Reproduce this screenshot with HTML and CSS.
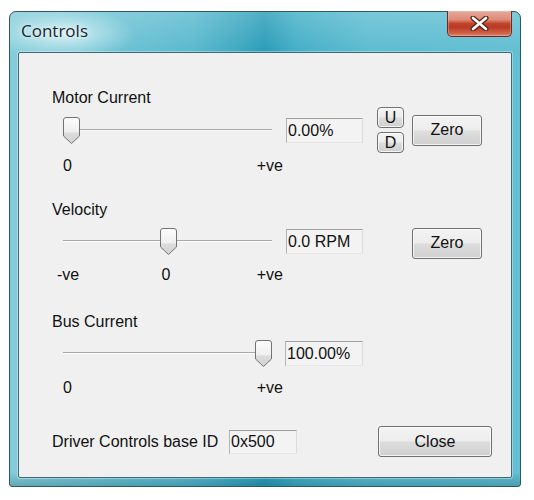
FILE: index.html
```html
<!DOCTYPE html>
<html>
<head>
<meta charset="utf-8">
<title>Controls</title>
<link rel="stylesheet" href="styles.css">
</head>
<body>
<div class="window">
  <div class="titlebar">
    <span class="title">Controls</span>
    <div class="close-btn">
      <svg width="19" height="15" viewBox="0 0 19 15">
        <path d="M3 2 L16 13 M16 2 L3 13" stroke="#5a2216" stroke-width="5" stroke-linecap="round"/>
        <path d="M3 2 L16 13 M16 2 L3 13" stroke="#ffffff" stroke-width="2.6" stroke-linecap="round"/>
      </svg>
    </div>
  </div>
  <div class="client">
    <div class="group">
      <div class="group-label">Motor Current</div>
      <div class="ctrl-row ctrl-row-tall">
        <div class="slider">
          <div class="track"></div>
          <svg class="thumb" style="left:0px" width="17" height="27" viewBox="0 0 17 27">
            <defs><linearGradient id="tg1" x1="0" y1="0" x2="0" y2="1"><stop offset="0" stop-color="#fdfdfd"/><stop offset="0.55" stop-color="#efefef"/><stop offset="0.6" stop-color="#dcdcdc"/><stop offset="1" stop-color="#d2d2d2"/></linearGradient></defs>
            <path d="M3 0.5 H14 Q16.5 0.5 16.5 3 V19 L8.5 26.5 L0.5 19 V3 Q0.5 0.5 3 0.5 Z" fill="url(#tg1)" stroke="#737373"/>
          </svg>
        </div>
        <div class="readout">0.00%</div>
        <div class="updown">
          <div class="btn btn-small">U</div>
          <div class="btn btn-small">D</div>
        </div>
        <div class="btn btn-zero">Zero</div>
      </div>
      <div class="ticks">
        <span>0</span><span>+ve</span>
      </div>
    </div>

    <div class="group group-velocity">
      <div class="group-label">Velocity</div>
      <div class="ctrl-row">
        <div class="slider">
          <div class="track"></div>
          <svg class="thumb" style="left:97px" width="17" height="27" viewBox="0 0 17 27">
            <defs><linearGradient id="tg2" x1="0" y1="0" x2="0" y2="1"><stop offset="0" stop-color="#fdfdfd"/><stop offset="0.55" stop-color="#efefef"/><stop offset="0.6" stop-color="#dcdcdc"/><stop offset="1" stop-color="#d2d2d2"/></linearGradient></defs>
            <path d="M3 0.5 H14 Q16.5 0.5 16.5 3 V19 L8.5 26.5 L0.5 19 V3 Q0.5 0.5 3 0.5 Z" fill="url(#tg2)" stroke="#737373"/>
          </svg>
        </div>
        <div class="readout">0.0 RPM</div>
        <div class="updown-spacer"></div>
        <div class="btn btn-zero btn-zero-low">Zero</div>
      </div>
      <div class="ticks ticks-wide">
        <span>-ve</span><span class="mid">0</span><span>+ve</span>
      </div>
    </div>

    <div class="group group-bus">
      <div class="group-label">Bus Current</div>
      <div class="ctrl-row">
        <div class="slider">
          <div class="track"></div>
          <svg class="thumb" style="left:192px" width="17" height="27" viewBox="0 0 17 27">
            <defs><linearGradient id="tg3" x1="0" y1="0" x2="0" y2="1"><stop offset="0" stop-color="#fdfdfd"/><stop offset="0.55" stop-color="#efefef"/><stop offset="0.6" stop-color="#dcdcdc"/><stop offset="1" stop-color="#d2d2d2"/></linearGradient></defs>
            <path d="M3 0.5 H14 Q16.5 0.5 16.5 3 V19 L8.5 26.5 L0.5 19 V3 Q0.5 0.5 3 0.5 Z" fill="url(#tg3)" stroke="#737373"/>
          </svg>
        </div>
        <div class="readout readout-bus">100.00%</div>
      </div>
      <div class="ticks">
        <span>0</span><span>+ve</span>
      </div>
    </div>

    <div class="bottom-row">
      <span class="base-label">Driver Controls base ID</span>
      <div class="readout readout-id">0x500</div>
      <div class="btn btn-close">Close</div>
    </div>
  </div>
</div>
</body>
</html>
```

FILE: styles.css
```css
html, body {
  margin: 0;
  padding: 0;
  background: #ffffff;
}

body {
  padding: 11px 0 0 9px;
  font-family: "Liberation Sans", Arial, sans-serif;
}

.window {
  width: 512px;
  height: 476px;
  box-sizing: border-box;
  border: 1px solid #2f5663;
  border-radius: 7px 7px 3px 3px;
  padding: 0 8px 8px 8px;
  background:
    radial-gradient(ellipse 70px 26px at 55px 22px, rgba(235, 250, 252, 0.75), rgba(235, 250, 252, 0) 100%),
    linear-gradient(to bottom, rgba(255, 255, 255, 0.18) 0px, rgba(255, 255, 255, 0) 40px, rgba(0, 0, 0, 0) 460px, rgba(0, 60, 80, 0.25) 474px),
    linear-gradient(to right, #86cddb 0%, #70c4d5 18%, #5ab9ce 36%, #3aa6bf 46%, #2b9db8 50%, #44afc7 56%, #5dbcd0 70%, #63bfd2 100%);
  display: flex;
  flex-direction: column;
}

.titlebar {
  height: 40px;
  display: flex;
  align-items: flex-start;
  padding-left: 3px;
}

.title {
  margin-top: 7px;
  font-family: "Open Sans", "Noto Sans", sans-serif;
  font-size: 17px;
  line-height: 23px;
  color: #17262b;
  text-shadow: 0 0 8px rgba(255, 255, 255, 0.9), 0 0 3px rgba(255, 255, 255, 0.8);
}

.close-btn {
  margin-left: auto;
  margin-top: -1px;
  width: 65px;
  height: 26px;
  box-sizing: border-box;
  border: 1px solid #6b2a1f;
  border-top: none;
  border-radius: 0 0 5px 5px;
  background: linear-gradient(to bottom, #e7a99d 0%, #dc8a78 35%, #c2442d 50%, #b83a24 65%, #d0654a 90%, #e0866a 100%);
  box-shadow: inset 0 0 0 1px rgba(255, 200, 190, 0.35);
  display: flex;
  align-items: center;
  justify-content: center;
}

.close-btn svg {
  display: block;
}

.client {
  height: 426px;
  box-sizing: border-box;
  border: 1px solid #3d6874;
  border-radius: 2px;
  background: #f0f0f0;
  box-shadow: 0 0 0 1px rgba(255, 255, 255, 0.35);
  padding: 36px 19px 0 33px;
  color: #111111;
  font-size: 16px;
}

.group-label {
  height: 18px;
  line-height: 18px;
}

.group-velocity {
  margin-top: 26px;
}

.group-bus {
  margin-top: 29px;
}

.ctrl-row {
  display: flex;
  align-items: center;
  height: 44px;
}

.ctrl-row-tall {
  height: 46px;
}

.slider {
  position: relative;
  width: 209px;
  height: 27px;
  margin-left: 11px;
}

.track {
  position: absolute;
  left: 0;
  right: 0;
  top: 12px;
  height: 0;
  border-top: 1px solid #a8a8a8;
  border-bottom: 1px solid #fbfbfb;
}

.thumb {
  position: absolute;
  top: 0;
  display: block;
}

.readout {
  margin-left: 14px;
  width: 77px;
  height: 25px;
  box-sizing: border-box;
  border-top: 1px solid #9e9e9e;
  border-left: 1px solid #b4b4b4;
  border-right: 1px solid #dedede;
  border-bottom: 1px solid #e6e6e6;
  background: #f3f3f3;
  padding-left: 1px;
  line-height: 23px;
  white-space: nowrap;
}

.readout-bus {
  margin-left: 13px;
  width: 78px;
}

.updown {
  margin-left: 14px;
  display: flex;
  flex-direction: column;
  gap: 4px;
}

.updown-spacer {
  margin-left: 14px;
  width: 27px;
}

.btn {
  box-sizing: border-box;
  border: 1px solid #707070;
  border-radius: 3px;
  background: linear-gradient(to bottom, #f4f4f4 0%, #ececec 48%, #dddddd 52%, #d0d0d0 100%);
  box-shadow: inset 0 0 0 1px rgba(255, 255, 255, 0.75);
  display: flex;
  align-items: center;
  justify-content: center;
  color: #111111;
}

.btn-small {
  width: 27px;
  height: 21px;
  border-radius: 4px;
  line-height: 19px;
}

.btn-zero {
  margin-left: 8px;
  width: 70px;
  height: 31px;
}

.btn-zero-low {
  margin-top: 4px;
}

.ticks {
  display: flex;
  justify-content: space-between;
  margin-top: 4px;
  margin-left: 11px;
  width: 220px;
  height: 18px;
  line-height: 18px;
}

.ticks-wide {
  margin-top: 3px;
  margin-left: 5px;
  width: 226px;
}

.ticks-wide .mid {
  margin-right: 4px;
}

.bottom-row {
  margin-top: 29px;
  display: flex;
  align-items: center;
  height: 31px;
}

.base-label {
  width: 177px;
  white-space: nowrap;
  line-height: 18px;
}

.readout-id {
  margin-left: 0;
  width: 68px;
  height: 24px;
  line-height: 22px;
}

.btn-close {
  margin-left: auto;
  width: 114px;
  height: 31px;
}
```
